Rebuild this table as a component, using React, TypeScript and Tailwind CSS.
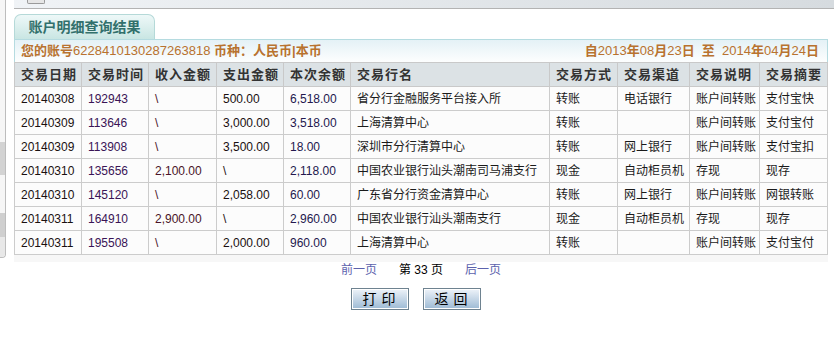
import React from "react";

const cols = [67, 67, 68, 67, 67, 199, 68, 72, 70, 68];
const heads = ["交易日期", "交易时间", "收入金额", "支出金额", "本次余额", "交易行名", "交易方式", "交易渠道", "交易说明", "交易摘要"];

const rows = [
  ["20140308", "192943", "\\", "500.00", "6,518.00", "省分行金融服务平台接入所", "转账", "电话银行", "账户间转账", "支付宝快"],
  ["20140309", "113646", "\\", "3,000.00", "3,518.00", "上海清算中心", "转账", "", "账户间转账", "支付宝付"],
  ["20140309", "113908", "\\", "3,500.00", "18.00", "深圳市分行清算中心", "转账", "网上银行", "账户间转账", "支付宝扣"],
  ["20140310", "135656", "2,100.00", "\\", "2,118.00", "中国农业银行汕头潮南司马浦支行", "现金", "自动柜员机", "存现", "现存"],
  ["20140310", "145120", "\\", "2,058.00", "60.00", "广东省分行资金清算中心", "转账", "网上银行", "账户间转账", "网银转账"],
  ["20140311", "164910", "2,900.00", "\\", "2,960.00", "中国农业银行汕头潮南支行", "现金", "自动柜员机", "存现", "现存"],
  ["20140311", "195508", "\\", "2,000.00", "960.00", "上海清算中心", "转账", "", "账户间转账", "支付宝付"],
];

// slight tints seen on the numeric columns
const cellColor = ["text-[#1a1010]", "text-[#3a1456]", "text-[#4a1428]", "text-[#1a1010]", "text-[#24184e]", "text-[#1a1a1a]", "text-[#1a1a1a]", "text-[#1a1a1a]", "text-[#1a1a1a]", "text-[#1a1a1a]"];

function Btn({ label }: { label: string }) {
  return (
    <button className="h-[22px] w-[58px] border border-[#6e8290] bg-gradient-to-b from-[#eef3f9] to-[#9dbad4] shadow-[inset_0_0_0_1px_#ffffff] text-[14px] leading-none text-black tracking-[0.35em] pl-[4px]">
      {label}
    </button>
  );
}

export default function App() {
  return (
    <div className="w-[834px] h-[337px] bg-white flex overflow-hidden font-['Liberation_Sans','Noto_Sans_CJK_SC',sans-serif]">
      {/* left frame edge */}
      <div className="w-[6px] h-[258px] flex flex-col border-r border-b border-[#bdbdbd] rounded-br-[4px] bg-[#f6f6f6] overflow-hidden shrink-0">
        <div className="h-[142px]" />
        <div className="h-[33px] bg-[#d3d3d3]" />
        <div className="h-[38px]" />
        <div className="h-[24px] bg-[#cfcfcf]" />
        <div className="flex-1 bg-[#e8e8e8]" />
      </div>

      <div className="ml-[8px] flex-1 flex flex-col">
        {/* top toolbar strip */}
        <div className="h-[9px] border-b border-[#b3b3b3] bg-gradient-to-r from-[#f0f3f6] to-[#d6dbdf] flex">
          <div className="ml-[13px] w-[18px] h-[4px] border border-t-0 border-[#9a9a9a] rounded-b-[2px] bg-[#e6e6e6]" />
        </div>

        {/* tab */}
        <div className="mt-[5px] w-[141px] h-[25px] rounded-t-[7px] border border-b-0 border-[#b5d9d8] bg-gradient-to-b from-[#eef8f8] to-[#c9e6e3] flex items-center justify-center text-[14px] font-bold text-[#32706c]">
          账户明细查询结果
        </div>

        <div className="w-[814px] flex flex-col">
          {/* info bar */}
          <div className="h-[23px] border border-b-0 border-[#b5dbe0] bg-gradient-to-b from-[#e4f1f6] to-[#fdfefe] flex items-center justify-between pl-[6px] pr-[8px] text-[13px] text-[#b8722f]">
            <div>
              <span className="font-bold">您的账号</span>
              <span>6228410130287263818</span>
              <span className="font-bold"> 币种：人民币|本币</span>
            </div>
            <div className="font-bold">
              自<span className="font-normal">2013</span>年<span className="font-normal">08</span>月<span className="font-normal">23</span>日&nbsp;&nbsp;至&nbsp;&nbsp;<span className="font-normal">2014</span>年<span className="font-normal">04</span>月<span className="font-normal">24</span>日
            </div>
          </div>

          <table className="w-[814px] table-fixed border-collapse text-left">
            <colgroup>
              {cols.map((w, i) => (
                <col key={i} style={{ width: w }} />
              ))}
            </colgroup>
            <thead>
              <tr className="h-[24px] bg-[#dce2e5]">
                {heads.map((h, i) => (
                  <th key={i} className="border border-[#c9c9c9] pl-[6px] text-[13px] font-bold tracking-[1px] text-[#333] whitespace-nowrap">
                    {h}
                  </th>
                ))}
              </tr>
            </thead>
            <tbody>
              {rows.map((r, ri) => (
                <tr key={ri} className="h-[24px] bg-[#fcfcfc]">
                  {r.map((c, ci) => (
                    <td key={ci} className={`border border-[#cccccc] pl-[6px] text-[12px] whitespace-nowrap overflow-hidden ${cellColor[ci]}`}>
                      {c}
                    </td>
                  ))}
                </tr>
              ))}
            </tbody>
          </table>
          <div className="h-[7px] bg-[#f7f7f7]" />

          {/* pagination */}
          <div className="h-[15px] flex items-center justify-center gap-[22px] text-[12px] leading-none">
            <span className="text-[#5c62ad]">前一页</span>
            <span className="text-black">第 33 页</span>
            <span className="text-[#5c62ad]">后一页</span>
          </div>

          <div className="mt-[11px] flex justify-center gap-[14px] pr-[11px]">
            <Btn label="打印" />
            <Btn label="返回" />
          </div>
        </div>
      </div>
    </div>
  );
}
